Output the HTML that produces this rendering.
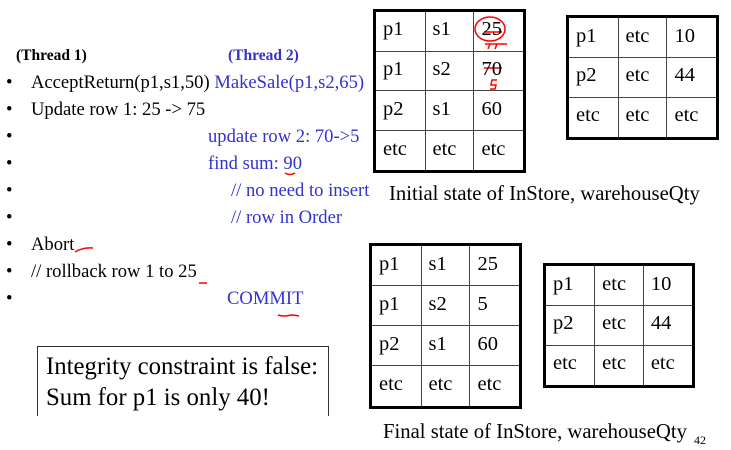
<!DOCTYPE html>
<html><head><style>
body{margin:0;width:731px;height:450px;background:#fff;position:relative;overflow:hidden;font-family:"Liberation Serif",serif;color:#000}
.a{position:absolute;white-space:nowrap}
.b{color:#3333cc}
.li{font-size:18.6px}
table{position:absolute;border-collapse:collapse;border:3px solid #000}
td{border:1.5px solid #444;font-size:20.5px;padding:0 0 3px 7px;vertical-align:middle;text-align:left}
</style></head><body>
<div class="a" style="left:16px;top:47px;font-size:15.5px;font-weight:bold">(Thread 1)</div>
<div class="a b" style="left:228px;top:47px;font-size:15.5px;font-weight:bold">(Thread 2)</div>
<div class="a li" style="left:6px;top:72px">•</div><div class="a li" style="left:31px;top:72px">AcceptReturn(p1,s1,50) <span class="b">MakeSale(p1,s2,65)</span></div>
<div class="a li" style="left:6px;top:99px">•</div><div class="a li" style="left:31px;top:99px">Update row 1: 25 -&gt; 75</div>
<div class="a li" style="left:6px;top:126px">•</div><div class="a li b" style="left:208px;top:126px">update row 2: 70-&gt;5</div>
<div class="a li" style="left:6px;top:153px">•</div><div class="a li b" style="left:208px;top:153px">find sum: 90</div>
<div class="a li" style="left:6px;top:180px">•</div><div class="a li b" style="left:231px;top:180px">// no need to insert</div>
<div class="a li" style="left:6px;top:207px">•</div><div class="a li b" style="left:231px;top:207px">// row in Order</div>
<div class="a li" style="left:6px;top:234px">•</div><div class="a li" style="left:31px;top:234px">Abort</div>
<div class="a li" style="left:6px;top:261px">•</div><div class="a li" style="left:31px;top:261px">// rollback row 1 to 25</div>
<div class="a li" style="left:6px;top:288px">•</div><div class="a li b" style="left:227px;top:288px">COMMIT</div>
<svg class="a" style="left:0;top:0" width="731" height="450" fill="none" stroke="red" stroke-width="1.5">
<path d="M285 173 q5 3 10 0"/><path d="M75 252 q8 -5 18 -4"/><path d="M199 283 h8"/><path d="M278 315 q6 2 13 0 q4 0 8 1"/>
<ellipse cx="490" cy="29" rx="15" ry="12"/><path d="M484 32 h18"/><path d="M485 44 h22 M490 44 l-2 5 M497 44 l-2 5"/>
<path d="M484 68 h18"/><path d="M497 80 h-5 l-1 5 h5 l-1 4 h-5"/>
</svg>
<table style="left:373px;top:9px;width:153px;height:164px"><tr><td>p1</td><td>s1</td><td>25</td></tr><tr><td>p1</td><td>s2</td><td>70</td></tr><tr><td>p2</td><td>s1</td><td>60</td></tr><tr><td>etc</td><td>etc</td><td>etc</td></tr></table>
<table style="left:566px;top:15px;width:153px;height:125px"><tr><td>p1</td><td>etc</td><td>10</td></tr><tr><td>p2</td><td>etc</td><td>44</td></tr><tr><td>etc</td><td>etc</td><td>etc</td></tr></table>
<div class="a" style="left:389px;top:183px;font-size:20.7px">Initial state of InStore, warehouseQty</div>
<table style="left:369px;top:243px;width:153px;height:166px"><tr><td>p1</td><td>s1</td><td>25</td></tr><tr><td>p1</td><td>s2</td><td>5</td></tr><tr><td>p2</td><td>s1</td><td>60</td></tr><tr><td>etc</td><td>etc</td><td>etc</td></tr></table>
<table style="left:543px;top:263px;width:152px;height:125px"><tr><td>p1</td><td>etc</td><td>10</td></tr><tr><td>p2</td><td>etc</td><td>44</td></tr><tr><td>etc</td><td>etc</td><td>etc</td></tr></table>
<div class="a" style="left:383px;top:421px;font-size:20.7px">Final state of InStore, warehouseQty</div>
<div class="a" style="left:694px;top:433px;font-size:12px">42</div>
<div class="a" style="left:37px;top:346px;width:290px;height:69px;border:1px solid #333;border-bottom:none"></div>
<div class="a" style="left:46px;top:351px;font-size:24.8px;line-height:31px">Integrity constraint is false:<br>Sum for p1 is only 40!</div>
</body></html>
